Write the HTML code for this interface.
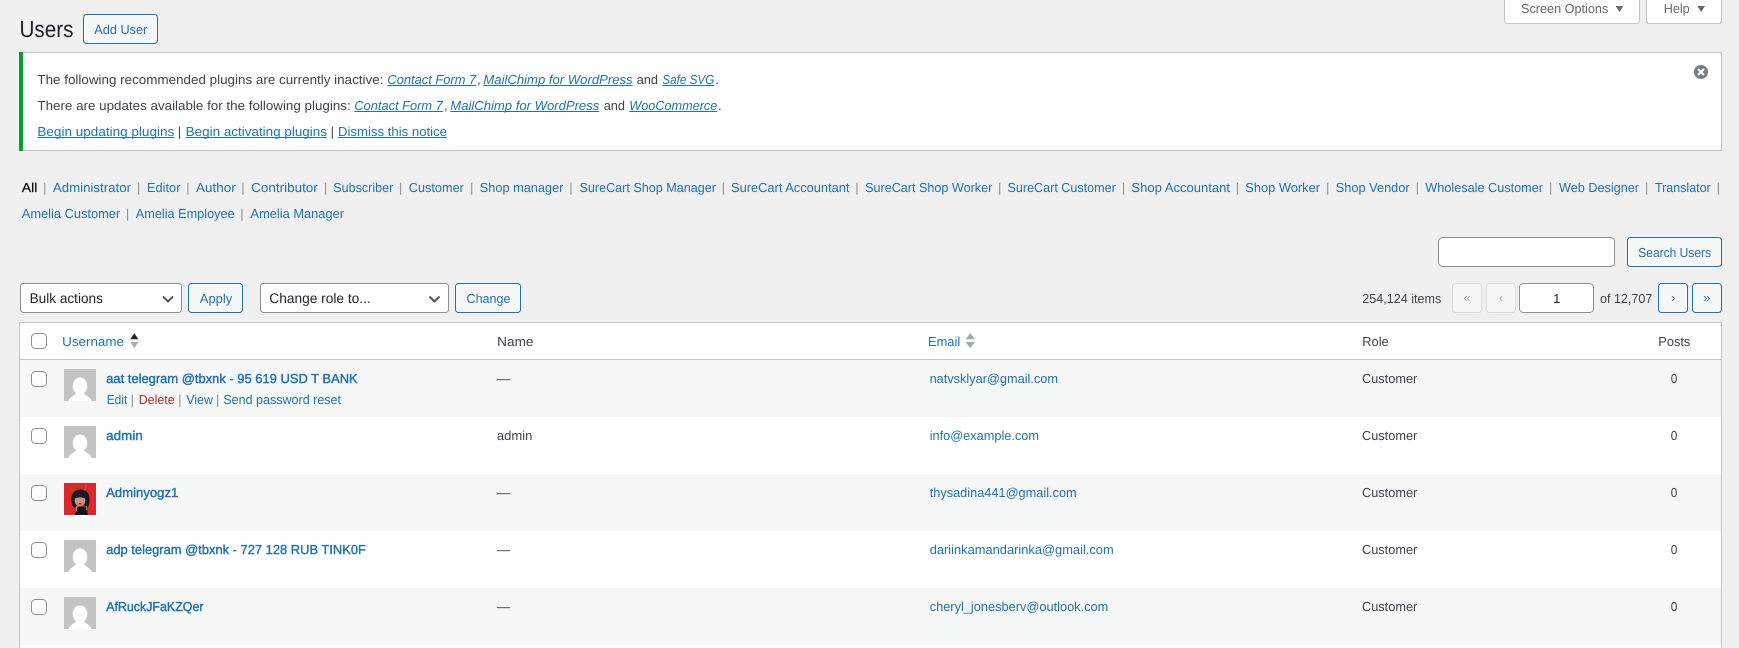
<!DOCTYPE html>
<html lang="en">
<head>
<meta charset="utf-8">
<title>Users</title>
<style>
html,body{margin:0;padding:0;background:#f0f0f1;width:1739px;height:648px;overflow:hidden}
svg{display:block}
text{font-family:"Liberation Sans",Arial,sans-serif;font-size:13px;fill:#3c434a;text-rendering:geometricPrecision}
.l{fill:#2271b1}
.b{stroke:#2271b1;stroke-width:.4px}
.i{font-style:italic}
.s{fill:#8c8f94}
.g{fill:#646970}
.d{fill:#1d2327}
.sel{font-size:14px}
.btn{fill:#f6f7f7;stroke:#2271b1}
.inp{fill:#fff;stroke:#8c8f94}
.dis{fill:#f6f7f7;stroke:#dcdcde}
.cb{fill:#fff;stroke:#8c8f94}
.ul{fill:#2271b1}
.chev{fill:none;stroke:#50575e;stroke-width:2}
</style>
</head>
<body>
<svg xmlns="http://www.w3.org/2000/svg" width="1739" height="648" viewBox="0 0 1739 648">
<defs>
<g id="av">
<rect width="32" height="32" fill="#c4c4c4"/>
<ellipse cx="16" cy="17" rx="7.300" ry="8.500" fill="#fff"/>
<path d="M4.500 32C5.500 28 10 27 12.500 24L19.500 24C22 27 26.500 28 27.500 32Z" fill="#fff"/>
</g>
<g id="rowcb"><rect x="0.5" y="0.5" width="15" height="15" rx="4" class="cb"/></g>
</defs>

<rect width="1739" height="648" fill="#f0f0f1"/>

<!-- Heading -->
<text x="19.500" y="37" class="d" style="font-size:23px" textLength="54" lengthAdjust="spacingAndGlyphs">Users</text>
<rect x="83.500" y="14.500" width="74" height="29" rx="3" class="btn"/>
<text x="94.300" y="34" class="l" textLength="53" lengthAdjust="spacingAndGlyphs">Add User</text>

<!-- Screen tabs -->
<path d="M1504.500 -2V20.500Q1504.500 23.500 1507.500 23.500H1636.500Q1639.500 23.500 1639.500 20.500V-2Z" fill="#fff" stroke="#c3c4c7"/>
<text x="1521" y="13" class="g" textLength="87.300" lengthAdjust="spacingAndGlyphs">Screen Options</text>
<path d="M1615.700 6H1623.300L1619.500 12Z" fill="#646970"/>
<path d="M1646.500 -2V20.500Q1646.500 23.500 1649.500 23.500H1718.500Q1721.500 23.500 1721.500 20.500V-2Z" fill="#fff" stroke="#c3c4c7"/>
<text x="1663.700" y="13" class="g" textLength="26" lengthAdjust="spacingAndGlyphs">Help</text>
<path d="M1697.300 6H1705L1701.150 12Z" fill="#646970"/>

<!-- Notice -->
<rect x="19.500" y="52.500" width="1702" height="98" fill="#fff" stroke="#c3c4c7"/>
<rect x="19" y="52" width="4" height="99" fill="#00a32a"/>
<circle cx="1701" cy="72" r="7" fill="#787c82"/>
<path d="M1698 69L1704 75M1704 69L1698 75" stroke="#fff" stroke-width="2"/>

<text x="37.400" y="84" textLength="346" lengthAdjust="spacingAndGlyphs">The following recommended plugins are currently inactive:</text>
<text x="387.400" y="84" class="l i" textLength="88.800" lengthAdjust="spacingAndGlyphs">Contact Form 7</text><rect x="387.400" y="85" width="88.800" height="1" class="ul"/>
<text x="477" y="84">,</text>
<text x="483.400" y="84" class="l i" textLength="149.200" lengthAdjust="spacingAndGlyphs">MailChimp for WordPress</text><rect x="483.400" y="85" width="149.200" height="1" class="ul"/>
<text x="636.700" y="84" textLength="21.300" lengthAdjust="spacingAndGlyphs">and</text>
<text x="662.300" y="84" class="l i" textLength="52" lengthAdjust="spacingAndGlyphs">Safe SVG</text><rect x="662.300" y="85" width="52" height="1" class="ul"/>
<text x="715.300" y="84">.</text>

<text x="37.400" y="110" textLength="313.300" lengthAdjust="spacingAndGlyphs">There are updates available for the following plugins:</text>
<text x="354.400" y="110" class="l i" textLength="88.400" lengthAdjust="spacingAndGlyphs">Contact Form 7</text><rect x="354.400" y="111" width="88.400" height="1" class="ul"/>
<text x="444" y="110">,</text>
<text x="450.300" y="110" class="l i" textLength="149" lengthAdjust="spacingAndGlyphs">MailChimp for WordPress</text><rect x="450.300" y="111" width="149" height="1" class="ul"/>
<text x="603.700" y="110" textLength="21.300" lengthAdjust="spacingAndGlyphs">and</text>
<text x="629.300" y="110" class="l i" textLength="88" lengthAdjust="spacingAndGlyphs">WooCommerce</text><rect x="629.300" y="111" width="88" height="1" class="ul"/>
<text x="718" y="110">.</text>

<text x="37.400" y="136" class="l" textLength="136.900" lengthAdjust="spacingAndGlyphs">Begin updating plugins</text><rect x="37.400" y="137" width="136.900" height="1" class="ul"/>
<text x="179.500" y="136" text-anchor="middle">|</text>
<text x="185.700" y="136" class="l" textLength="141.300" lengthAdjust="spacingAndGlyphs">Begin activating plugins</text><rect x="185.700" y="137" width="141.300" height="1" class="ul"/>
<text x="332.300" y="136" text-anchor="middle">|</text>
<text x="338" y="136" class="l" textLength="109" lengthAdjust="spacingAndGlyphs">Dismiss this notice</text><rect x="338" y="137" width="109" height="1" class="ul"/>

<!-- Role filter -->
<text x="21.800" y="192" style="fill:#000;stroke:#000;stroke-width:.2px" textLength="15.600" lengthAdjust="spacingAndGlyphs">All</text>
<text x="44.800" y="192" class="s" text-anchor="middle">|</text>
<text x="52.900" y="192" class="l" textLength="78.100" lengthAdjust="spacingAndGlyphs">Administrator</text>
<text x="138.700" y="192" class="s" text-anchor="middle">|</text>
<text x="146.900" y="192" class="l" textLength="33.600" lengthAdjust="spacingAndGlyphs">Editor</text>
<text x="188" y="192" class="s" text-anchor="middle">|</text>
<text x="196" y="192" class="l" textLength="39.700" lengthAdjust="spacingAndGlyphs">Author</text>
<text x="243" y="192" class="s" text-anchor="middle">|</text>
<text x="251.200" y="192" class="l" textLength="66.600" lengthAdjust="spacingAndGlyphs">Contributor</text>
<text x="325.600" y="192" class="s" text-anchor="middle">|</text>
<text x="333.300" y="192" class="l" textLength="60" lengthAdjust="spacingAndGlyphs">Subscriber</text>
<text x="400.700" y="192" class="s" text-anchor="middle">|</text>
<text x="408.800" y="192" class="l" textLength="55.100" lengthAdjust="spacingAndGlyphs">Customer</text>
<text x="471.700" y="192" class="s" text-anchor="middle">|</text>
<text x="479.800" y="192" class="l" textLength="83.600" lengthAdjust="spacingAndGlyphs">Shop manager</text>
<text x="570.900" y="192" class="s" text-anchor="middle">|</text>
<text x="579.500" y="192" class="l" textLength="136.400" lengthAdjust="spacingAndGlyphs">SureCart Shop Manager</text>
<text x="723.300" y="192" class="s" text-anchor="middle">|</text>
<text x="731" y="192" class="l" textLength="118.500" lengthAdjust="spacingAndGlyphs">SureCart Accountant</text>
<text x="856.900" y="192" class="s" text-anchor="middle">|</text>
<text x="865.100" y="192" class="l" textLength="127.200" lengthAdjust="spacingAndGlyphs">SureCart Shop Worker</text>
<text x="999.700" y="192" class="s" text-anchor="middle">|</text>
<text x="1007.500" y="192" class="l" textLength="108.300" lengthAdjust="spacingAndGlyphs">SureCart Customer</text>
<text x="1123.600" y="192" class="s" text-anchor="middle">|</text>
<text x="1131.400" y="192" class="l" textLength="98.600" lengthAdjust="spacingAndGlyphs">Shop Accountant</text>
<text x="1237.500" y="192" class="s" text-anchor="middle">|</text>
<text x="1245.300" y="192" class="l" textLength="74.700" lengthAdjust="spacingAndGlyphs">Shop Worker</text>
<text x="1327.700" y="192" class="s" text-anchor="middle">|</text>
<text x="1335.700" y="192" class="l" textLength="74" lengthAdjust="spacingAndGlyphs">Shop Vendor</text>
<text x="1417.300" y="192" class="s" text-anchor="middle">|</text>
<text x="1425.300" y="192" class="l" textLength="117.700" lengthAdjust="spacingAndGlyphs">Wholesale Customer</text>
<text x="1550.700" y="192" class="s" text-anchor="middle">|</text>
<text x="1559" y="192" class="l" textLength="80" lengthAdjust="spacingAndGlyphs">Web Designer</text>
<text x="1646.700" y="192" class="s" text-anchor="middle">|</text>
<text x="1655" y="192" class="l" textLength="55.700" lengthAdjust="spacingAndGlyphs">Translator</text>
<text x="1718.300" y="192" class="s" text-anchor="middle">|</text>

<text x="21.800" y="218" class="l" textLength="98.400" lengthAdjust="spacingAndGlyphs">Amelia Customer</text>
<text x="127.600" y="218" class="s" text-anchor="middle">|</text>
<text x="135.800" y="218" class="l" textLength="98.800" lengthAdjust="spacingAndGlyphs">Amelia Employee</text>
<text x="242" y="218" class="s" text-anchor="middle">|</text>
<text x="250.500" y="218" class="l" textLength="93.500" lengthAdjust="spacingAndGlyphs">Amelia Manager</text>

<!-- Search -->
<rect x="1438.500" y="237.500" width="176" height="29" rx="4" class="inp"/>
<rect x="1627.500" y="237.500" width="94" height="29" rx="3" class="btn"/>
<text x="1638.300" y="257" class="l" textLength="72.700" lengthAdjust="spacingAndGlyphs">Search Users</text>

<!-- Bulk actions -->
<rect x="20.500" y="283.500" width="161" height="29" rx="3" class="inp"/>
<text x="29.600" y="303" class="d sel" textLength="73.300" lengthAdjust="spacingAndGlyphs">Bulk actions</text>
<path d="M163 296.500L168 301.500L173 296.500" class="chev"/>
<rect x="188.500" y="283.500" width="54" height="29" rx="3" class="btn"/>
<text x="199.800" y="303" class="l" textLength="32.500" lengthAdjust="spacingAndGlyphs">Apply</text>
<rect x="260.500" y="283.500" width="188" height="29" rx="3" class="inp"/>
<text x="269.300" y="303" class="d sel" textLength="101.400" lengthAdjust="spacingAndGlyphs">Change role to...</text>
<path d="M429.500 296.500L434.500 301.500L439.500 296.500" class="chev"/>
<rect x="455.500" y="283.500" width="65" height="29" rx="3" class="btn"/>
<text x="466.500" y="303" class="l" textLength="44" lengthAdjust="spacingAndGlyphs">Change</text>

<!-- Pagination -->
<text x="1362.300" y="303" textLength="79" lengthAdjust="spacingAndGlyphs">254,124 items</text>
<rect x="1452.500" y="283.500" width="29" height="29" rx="3" class="dis"/>
<text x="1467" y="302" text-anchor="middle" style="fill:#a7aaad">«</text>
<rect x="1486.500" y="283.500" width="29" height="29" rx="3" class="dis"/>
<text x="1501" y="302" text-anchor="middle" style="fill:#a7aaad">‹</text>
<rect x="1519.500" y="283.500" width="74" height="29" rx="4" class="inp"/>
<text x="1556.700" y="303" text-anchor="middle" class="d">1</text>
<text x="1600" y="303" textLength="52.300" lengthAdjust="spacingAndGlyphs">of 12,707</text>
<rect x="1658.500" y="283.500" width="29" height="29" rx="3" class="btn"/>
<text x="1673.300" y="302" text-anchor="middle" class="l">›</text>
<rect x="1692.500" y="283.500" width="29" height="29" rx="3" class="btn"/>
<text x="1706.700" y="302" text-anchor="middle" class="l">»</text>

<!-- Table -->
<rect x="19.500" y="322.500" width="1702" height="340" fill="#fff" stroke="#c3c4c7"/>
<rect x="20" y="360" width="1701" height="57" fill="#f6f7f7"/>
<rect x="20" y="474" width="1701" height="57" fill="#f6f7f7"/>
<rect x="20" y="588" width="1701" height="57" fill="#f6f7f7"/>
<rect x="20" y="359" width="1701" height="1" fill="#c3c4c7"/>

<!-- Header row -->
<use href="#rowcb" x="31" y="333"/>
<text x="62.200" y="346" class="l" textLength="61.800" lengthAdjust="spacingAndGlyphs">Username</text>
<path d="M130.200 339.300L134.300 333.300L138.400 339.300Z" fill="#1d2327"/>
<path d="M130.200 342L134.300 348.300L138.400 342Z" fill="#a7aaad"/>
<text x="497.200" y="346" textLength="36.300" lengthAdjust="spacingAndGlyphs">Name</text>
<text x="928" y="346" class="l" textLength="32.200" lengthAdjust="spacingAndGlyphs">Email</text>
<path d="M965.700 339.300L970.300 333L974.900 339.300Z" fill="#a7aaad"/>
<path d="M965.700 342L970.300 348.300L974.900 342Z" fill="#a7aaad"/>
<text x="1362.300" y="346" textLength="26.400" lengthAdjust="spacingAndGlyphs">Role</text>
<text x="1658.300" y="346" textLength="32" lengthAdjust="spacingAndGlyphs">Posts</text>

<!-- Row 1 -->
<use href="#rowcb" x="31" y="371"/>
<use href="#av" x="64" y="369"/>
<text x="106.200" y="383" class="l b" textLength="251.500" lengthAdjust="spacingAndGlyphs">aat telegram @tbxnk - 95 619 USD T BANK</text>
<text x="106.700" y="404" class="l" textLength="20.600" lengthAdjust="spacingAndGlyphs">Edit</text>
<text x="132.300" y="404" class="s" text-anchor="middle">|</text>
<text x="138.700" y="404" style="fill:#b32d2e" textLength="36" lengthAdjust="spacingAndGlyphs">Delete</text>
<text x="180" y="404" class="s" text-anchor="middle">|</text>
<text x="186.300" y="404" class="l" textLength="26.700" lengthAdjust="spacingAndGlyphs">View</text>
<text x="217.700" y="404" class="s" text-anchor="middle">|</text>
<text x="223.300" y="404" class="l" textLength="117.700" lengthAdjust="spacingAndGlyphs">Send password reset</text>
<text x="497" y="383" textLength="13.200" lengthAdjust="spacingAndGlyphs">—</text>
<text x="929.600" y="383" class="l" textLength="128.400" lengthAdjust="spacingAndGlyphs">natvsklyar@gmail.com</text>
<text x="1362" y="383" textLength="55.300" lengthAdjust="spacingAndGlyphs">Customer</text>
<text x="1670.700" y="383" textLength="6.600" lengthAdjust="spacingAndGlyphs">0</text>

<!-- Row 2 -->
<use href="#rowcb" x="31" y="428"/>
<use href="#av" x="64" y="426"/>
<text x="106.200" y="440" class="l b" textLength="36.600" lengthAdjust="spacingAndGlyphs">admin</text>
<text x="496.900" y="440" textLength="35.500" lengthAdjust="spacingAndGlyphs">admin</text>
<text x="929.700" y="440" class="l" textLength="109.300" lengthAdjust="spacingAndGlyphs">info@example.com</text>
<text x="1362" y="440" textLength="55.300" lengthAdjust="spacingAndGlyphs">Customer</text>
<text x="1670.700" y="440" textLength="6.600" lengthAdjust="spacingAndGlyphs">0</text>

<!-- Row 3 -->
<use href="#rowcb" x="31" y="485"/>
<g transform="translate(64 483)">
<rect width="32" height="32" fill="#d9282e"/>
<path d="M6.500 3L8.500 4.500L10.500 10L9 11Z" fill="#8a5a32"/>
<path d="M21 1L22.500 2L21.500 9L20 10Z" fill="#9b6a3a"/>
<ellipse cx="16.500" cy="14.500" rx="9" ry="8" fill="#1c1a20"/>
<path d="M7.800 14C7 18 7.500 22 10 25L13.500 22L12.500 15Z" fill="#1c1a20"/>
<path d="M25.300 14C26 18 25.500 22 23.500 25L20 22L20.500 15Z" fill="#1c1a20"/>
<ellipse cx="16" cy="17.500" rx="5.300" ry="5.800" fill="#c98f88"/>
<path d="M10.500 13.500Q16 10 21.500 13.500L21 15.500Q16 13 11 15.500Z" fill="#1c1a20"/>
<rect x="14.800" y="20" width="2.600" height="1.400" fill="#a01015"/>
<path d="M11 32L12.500 25L16 23.500L20 23.500L23 25L24 32Z" fill="#17141a"/>
<rect x="12" y="23" width="1" height="5" fill="#a8803f"/>
<rect x="22" y="23" width="1" height="4" fill="#a8803f"/>
</g>
<text x="106.200" y="497" class="l b" textLength="72.100" lengthAdjust="spacingAndGlyphs">Adminyogz1</text>
<text x="497" y="497" textLength="13.200" lengthAdjust="spacingAndGlyphs">—</text>
<text x="929.700" y="497" class="l" textLength="147" lengthAdjust="spacingAndGlyphs">thysadina441@gmail.com</text>
<text x="1362" y="497" textLength="55.300" lengthAdjust="spacingAndGlyphs">Customer</text>
<text x="1670.700" y="497" textLength="6.600" lengthAdjust="spacingAndGlyphs">0</text>

<!-- Row 4 -->
<use href="#rowcb" x="31" y="542"/>
<use href="#av" x="64" y="540"/>
<text x="106.200" y="554" class="l b" textLength="259.700" lengthAdjust="spacingAndGlyphs">adp telegram @tbxnk - 727 128 RUB TINK0F</text>
<text x="497" y="554" textLength="13.200" lengthAdjust="spacingAndGlyphs">—</text>
<text x="929.700" y="554" class="l" textLength="184" lengthAdjust="spacingAndGlyphs">dariinkamandarinka@gmail.com</text>
<text x="1362" y="554" textLength="55.300" lengthAdjust="spacingAndGlyphs">Customer</text>
<text x="1670.700" y="554" textLength="6.600" lengthAdjust="spacingAndGlyphs">0</text>

<!-- Row 5 -->
<use href="#rowcb" x="31" y="599"/>
<use href="#av" x="64" y="597"/>
<text x="106.200" y="611" class="l b" textLength="97.300" lengthAdjust="spacingAndGlyphs">AfRuckJFaKZQer</text>
<text x="497" y="611" textLength="13.200" lengthAdjust="spacingAndGlyphs">—</text>
<text x="929.700" y="611" class="l" textLength="178.600" lengthAdjust="spacingAndGlyphs">cheryl_jonesberv@outlook.com</text>
<text x="1362" y="611" textLength="55.300" lengthAdjust="spacingAndGlyphs">Customer</text>
<text x="1670.700" y="611" textLength="6.600" lengthAdjust="spacingAndGlyphs">0</text>
</svg>
</body>
</html>
